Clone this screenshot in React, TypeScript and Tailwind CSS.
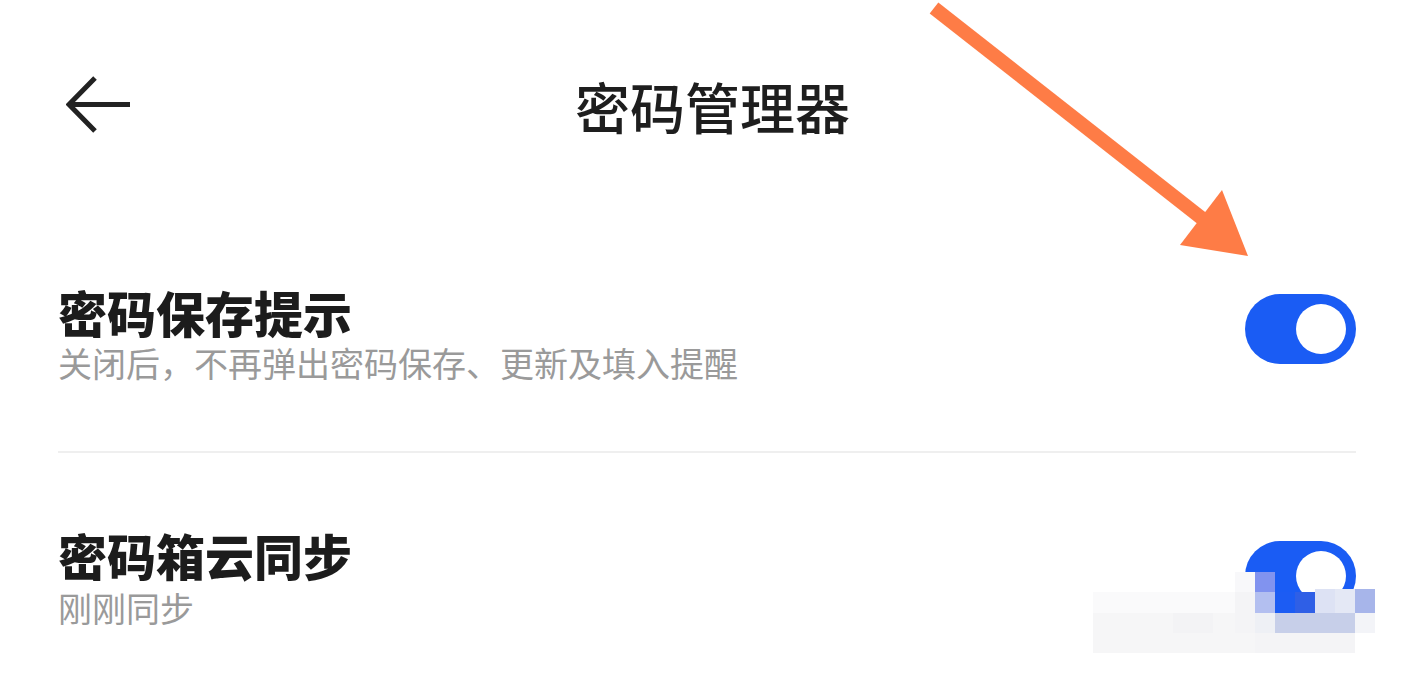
import React from "react";

const font = { fontFamily: '"Noto Sans CJK SC", "Noto Sans", sans-serif' };

function Toggle() {
  return (
    <div className="w-[111px] h-[70px] rounded-full bg-[#1a5cf4] flex items-center justify-end pr-[10px] shrink-0">
      <div className="w-[50px] h-[50px] rounded-full bg-white" />
    </div>
  );
}

const mosaic: [number, number, number, number, string][] = [
  [1093, 592, 162, 21, "#fafafb"],
  [1093, 613, 162, 40, "#f6f6f7"],
  [1173, 613, 40, 20, "#f3f3f5"],
  [1235, 572, 20, 20, "#f8f8fa"],
  [1235, 592, 20, 41, "#f4f4f6"],
  [1255, 572, 20, 20, "#8193ef"],
  [1255, 592, 20, 21, "#b3bff0"],
  [1275, 592, 20, 21, "#1c5cf3"],
  [1295, 592, 20, 21, "#2f5fe6"],
  [1315, 589, 20, 24, "#dde2f4"],
  [1335, 589, 20, 24, "#e4e8f5"],
  [1355, 589, 20, 24, "#a7b5ea"],
  [1255, 613, 20, 20, "#eef0f5"],
  [1275, 613, 80, 20, "#c7cfe9"],
  [1355, 613, 20, 20, "#f3f4f8"],
  [1255, 633, 100, 20, "#f4f4f6"],
];

export default function App() {
  return (
    <div className="relative w-[1405px] h-[680px] overflow-hidden bg-white" style={font}>
      <div className="flex flex-col pl-[58px] pr-[49px]">
        {/* Header */}
        <div className="h-[210px] grid grid-cols-[1fr_auto_1fr] items-center">
          <div className="flex items-center">
            <svg width="66" height="58" viewBox="0 0 66 58" className="ml-[8px]">
              <path d="M29 2 L3 28.5 L29 55 M3 28.5 L64 28.5" fill="none" stroke="#222" strokeWidth="5" strokeLinejoin="miter" />
            </svg>
          </div>
          <div className="pl-[11px] text-[55px] leading-none font-medium text-[#1e1e1e]">密码管理器</div>
          <div />
        </div>

        {/* Row 1 */}
        <div className="pt-[77px] pb-[71px] flex items-start justify-between">
          <div className="flex flex-col gap-[10px]">
            <div className="text-[49px] leading-none font-black text-[#1c1c1c]">密码保存提示</div>
            <div className="text-[34px] leading-none text-[#9a9a9a]">关闭后，不再弹出密码保存、更新及填入提醒</div>
          </div>
          <div className="mt-[7px]">
            <Toggle />
          </div>
        </div>

        <div className="h-[2px] bg-[#efefef]" />

        {/* Row 2 */}
        <div className="pt-[77px] flex items-start justify-between">
          <div className="flex flex-col gap-[12px]">
            <div className="text-[49px] leading-none font-black text-[#1c1c1c]">密码箱云同步</div>
            <div className="text-[34px] leading-none text-[#9a9a9a]">刚刚同步</div>
          </div>
          <div className="mt-[11px]">
            <Toggle />
          </div>
        </div>
      </div>

      {/* mosaic overlay */}
      {mosaic.map(([x, y, w, h, c], i) => (
        <div key={i} className="absolute" style={{ left: x, top: y, width: w, height: h, background: c }} />
      ))}

      {/* orange annotation arrow */}
      <svg className="absolute left-0 top-0 pointer-events-none" width="1405" height="680" viewBox="0 0 1405 680">
        <line x1="934" y1="8" x2="1204" y2="220" stroke="#fe7c46" strokeWidth="14" />
        <polygon points="1180,245 1222,190 1248,256" fill="#fe7c46" />
      </svg>
    </div>
  );
}
